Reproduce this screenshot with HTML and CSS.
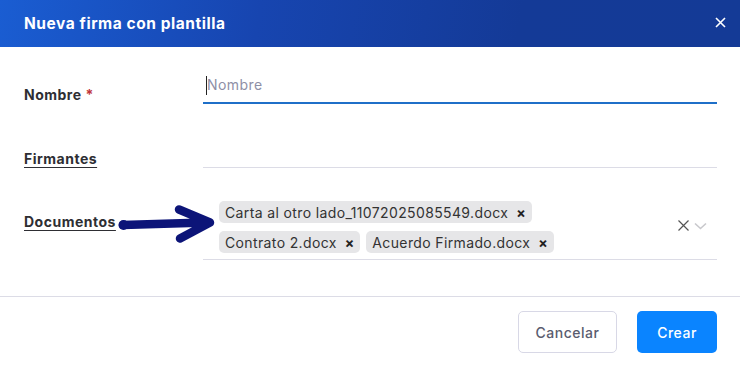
FILE: index.html
```html
<!DOCTYPE html>
<html lang="es">
<head>
<meta charset="utf-8">
<title>Nueva firma con plantilla</title>
<link rel="stylesheet" href="styles.css">
</head>
<body>
<div class="dialog">
  <header class="header">
    <h1 class="title">Nueva firma con plantilla</h1>
    <button class="close" aria-label="Cerrar">
      <svg width="11" height="11" viewBox="0 0 11 11"><path d="M1 1L10 10M10 1L1 10" stroke="#fff" stroke-width="1.6" fill="none"/></svg>
    </button>
  </header>
  <main class="body">
    <div class="row row-name">
      <label class="label">Nombre <span class="req">*</span></label>
      <div class="field field-active"><span class="caret"></span><span class="placeholder">Nombre</span></div>
    </div>
    <div class="row row-firm">
      <label class="label label-link">Firmantes</label>
      <div class="field"></div>
    </div>
    <div class="row row-docs">
      <label class="label label-link label-docs">Documentos</label>
      <svg class="arrow" width="102" height="42" viewBox="0 0 102 42"><path d="M7 22 L89 19.5 M63 6.5 L94 19.5 L64 35.5" stroke="#0c1478" stroke-width="8.5" stroke-linecap="round" stroke-linejoin="round" fill="none"/><circle cx="7.5" cy="22" r="5" fill="#0c1478"/></svg>
      <div class="field field-docs">
        <div class="chips">
          <span class="chip">Carta al otro lado_11072025085549.docx<span class="chip-x">×</span></span>
          <span class="chip">Contrato 2.docx<span class="chip-x">×</span></span>
          <span class="chip">Acuerdo Firmado.docx<span class="chip-x">×</span></span>
        </div>
        <div class="indicators">
          <svg width="13" height="13" viewBox="0 0 13 13"><path d="M1.5 1.5L11.5 11.5M11.5 1.5L1.5 11.5" stroke="#555" stroke-width="1.2" fill="none"/></svg>
          <svg width="13" height="8" viewBox="0 0 13 8"><path d="M1 1.5L6.5 6.5L12 1.5" stroke="#c8c8cc" stroke-width="1.6" fill="none"/></svg>
        </div>
      </div>
    </div>
  </main>
  <footer class="footer">
    <button class="btn btn-cancel">Cancelar</button>
    <button class="btn btn-create">Crear</button>
  </footer>
</div>
</body>
</html>
```
FILE: styles.css
```css
* { box-sizing: border-box; }
html, body { margin: 0; padding: 0; background: #fff; }
body { font-family: Inter, "Noto Sans", sans-serif; color: #2e2e33; }
.dialog { width: 740px; height: 366px; background: #fff; overflow: hidden; }
.header {
  height: 47px;
  padding: 0 14px 0 24px;
  display: flex;
  align-items: center;
  justify-content: space-between;
  background: linear-gradient(100deg, #1a5dd2 0%, #1745b0 35%, #143a97 70%, #143a96 100%);
}
.title { margin: 0; font-size: 15.5px; font-weight: 700; color: #fff; letter-spacing: 0.55px; margin-top: -1px; }
.close { background: none; border: 0; padding: 0; width: 11px; height: 11px; display: flex; margin-top: -2px; }
.body { padding: 13px 23px 0 24px; }
.row { display: flex; position: relative; }
.row + .row { margin-top: 20px; }
.label {
  width: 179px;
  flex: none;
  font-size: 14px;
  font-weight: 700;
  line-height: 20px;
  letter-spacing: 0.5px;
  color: #2e2e33;
  margin-top: 25px;
  height: 20px;
  margin-bottom: -1px;
}
.label-link { text-decoration: underline; text-underline-offset: 3px; }
.req { color: #c0353a; }
.field {
  flex: 1;
  height: 44px;
  border-bottom: 1px solid #dcdce6;
  position: relative;
}
.field-active { border-bottom: 2px solid #1f6fc8; padding: 16px 0 0 3px; display: flex; align-items: flex-start; }
.caret { display: block; width: 1px; height: 19px; background: #222; }
.placeholder { font-size: 14px; line-height: 20px; color: #8e8fa6; margin-top: -1px; letter-spacing: 0.45px; }
.label-docs { margin-top: 24px; }
.arrow { position: absolute; left: 92px; top: 15px; }
.field-docs { height: 72px; padding: 13px 0 0 16px; display: flex; justify-content: space-between; }
.chips { display: flex; flex-wrap: wrap; gap: 8px 6px; width: 360px; align-content: flex-start; }
.chip {
  display: inline-flex;
  align-items: center;
  height: 22px;
  background: #e6e6e8;
  border-radius: 5px;
  padding: 0 6px 0 6px;
  font-size: 14px;
  letter-spacing: 0.37px;
  color: #333;
  white-space: nowrap;
}
.chip-x { font-size: 14px; font-weight: 700; margin-left: 8px; color: #222; letter-spacing: 0; }
.indicators { display: flex; align-items: center; gap: 4px; margin-top: 18px; margin-right: 10px; height: 13px; }
.footer {
  margin-top: 36px;
  border-top: 1px solid #dcdce6;
  padding: 14px 23px 0 0;
  display: flex;
  justify-content: flex-end;
  gap: 20px;
}
.btn {
  height: 42px;
  border-radius: 5px;
  font-family: inherit;
  font-size: 14px;
  font-weight: 500;
  letter-spacing: 0.5px;
  cursor: pointer;
}
.btn-cancel { width: 99px; background: #fff; border: 1px solid #d8d8e6; color: #5a5c6e; }
.btn-create { width: 80px; background: #0a84ff; border: 0; color: #fff; }
```
